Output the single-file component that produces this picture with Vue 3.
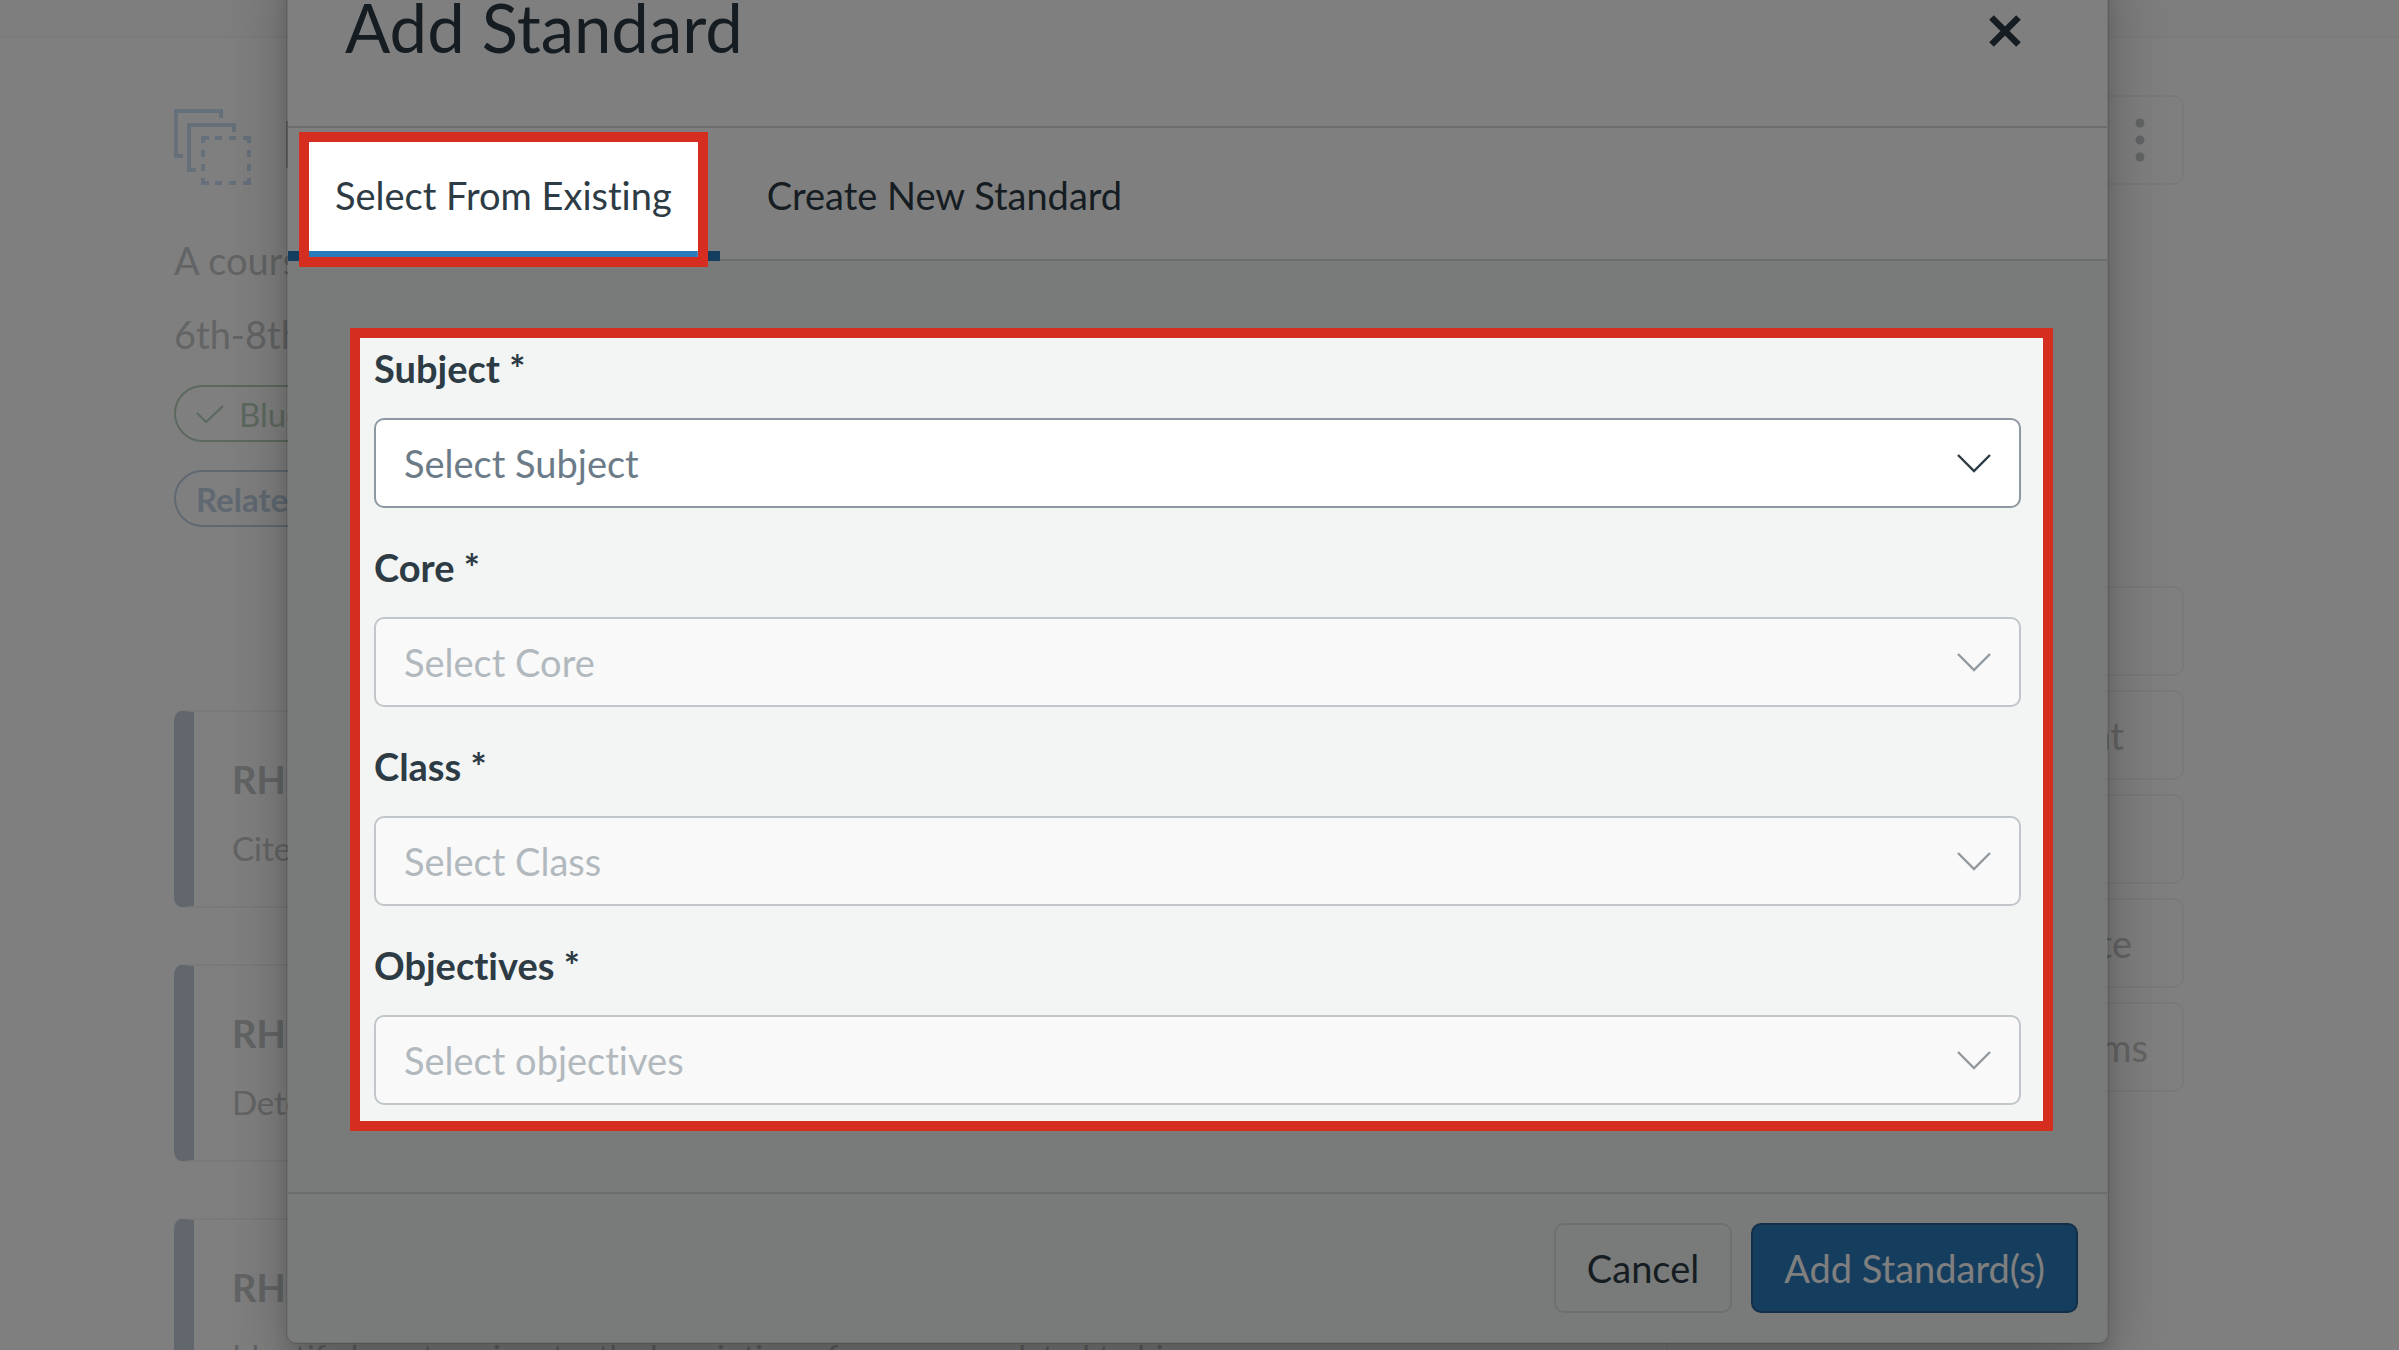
<script setup>
const fields = [
  { id: 'subject', label: 'Subject', placeholder: 'Select Subject', disabled: false },
  { id: 'core', label: 'Core', placeholder: 'Select Core', disabled: true },
  { id: 'class', label: 'Class', placeholder: 'Select Class', disabled: true },
  { id: 'objectives', label: 'Objectives', placeholder: 'Select objectives', disabled: true },
]

const standards = [
  { code: 'RH 6-8.1', text: 'Cite specific textual evidence to support analysis' },
  { code: 'RH 6-8.2', text: 'Determine the central ideas or information' },
  { code: 'RH 6-8.3', text: "Identify key steps in a text's description of a process related to hi..." },
]

const actions = [
  { text: '', size: 'short' },
  { text: 'Content', size: 'short' },
  { text: '', size: 'short' },
  { text: 'Duplicate', size: 'medium' },
  { text: 'Programs', size: 'long' },
]
</script>

<template>
  <div class="app">
    <div class="page">
      <div class="navbar"></div>
      <div class="columns">
        <main class="course">
          <div class="course-head">
            <svg class="course-icon" viewBox="0 0 78 78" fill="none" stroke="#cce0f4" stroke-width="4">
              <path d="M47 9V2H2v45h7" />
              <path d="M60 23v-7H15v45h7" />
              <path d="M29 34v-5h6M41 29h7M55 29h7M69 29h6v5M75 41v7M75 55v7M75 69v5h-6M62 74h-7M48 74h-7M35 74h-6v-5M29 62v-7M29 48v-7" />
            </svg>
            <h1>History</h1>
          </div>
          <p class="line">A course</p>
          <p class="line grades">6th-8th</p>
          <span class="pill published">
            <svg viewBox="0 0 28 20" fill="none" stroke="currentColor" stroke-width="2"><path d="M1 9l9 9L27 2" /></svg>
            Blueprint
          </span>
          <span class="pill related">Related</span>
          <section class="cards">
            <article v-for="item in standards" :key="item.code" class="card">
              <h2>{{ item.code }}</h2>
              <p>{{ item.text }}</p>
            </article>
          </section>
        </main>
        <aside class="side">
          <button class="side-button more" aria-label="More options">
            <svg viewBox="0 0 10 44" fill="currentColor"><circle cx="5" cy="5" r="4.5" /><circle cx="5" cy="22" r="4.5" /><circle cx="5" cy="39" r="4.5" /></svg>
          </button>
          <div class="actions">
            <button v-for="(action, i) in actions" :key="i" class="side-button" :class="action.size">{{ action.text }}</button>
          </div>
        </aside>
      </div>
    </div>

    <div class="modal" role="dialog" aria-labelledby="modal-title">
      <header class="modal-head">
        <h2 id="modal-title">Add Standard</h2>
        <button class="close" aria-label="Close">
          <svg viewBox="0 0 32 32" stroke="currentColor" stroke-width="6.5"><path d="M2.5 2.5l27 27M29.5 2.5l-27 27" /></svg>
        </button>
      </header>
      <nav class="tabs">
        <button class="tab active"><span class="spotlight tab-spotlight">Select From Existing</span></button>
        <button class="tab">Create New Standard</button>
      </nav>
      <div class="modal-body">
        <form class="spotlight form-spotlight">
          <div v-for="field in fields" :key="field.id" class="field">
            <label :for="field.id">{{ field.label }} *</label>
            <div class="select-wrap">
              <select :id="field.id" :disabled="field.disabled">
                <option>{{ field.placeholder }}</option>
              </select>
              <svg class="chevron" viewBox="0 0 34 20" fill="none" stroke="currentColor" stroke-width="2.4"><path d="M1 2l16 16L33 2" /></svg>
            </div>
          </div>
        </form>
      </div>
      <footer class="modal-foot">
        <button class="button">Cancel</button>
        <button class="button primary">Add Standard(s)</button>
      </footer>
    </div>

    <div class="dim"></div>
  </div>
</template>

<style>
body {
  background: #808080;
}
</style>

<style scoped>
* {
  box-sizing: border-box;
}
h1,
h2,
p {
  margin: 0;
}
button,
select {
  font: inherit;
  font-variant-ligatures: none;
}
.app {
  position: relative;
  display: grid;
  grid-template-columns: minmax(0, 1fr);
  height: 100vh;
  overflow: hidden;
  font-family: Lato, sans-serif;
  font-size: 38px;
  line-height: 46px;
  font-variant-ligatures: none;
  color: #2d3b45;
}
.page,
.modal {
  grid-area: 1 / 1;
}
.page {
  background: #fff;
  color: #c6c9ca;
}
.navbar {
  height: 38px;
  background: #fcfcfc;
  border-bottom: 2px solid #f8f8f8;
}
.columns {
  display: flex;
  justify-content: space-between;
  gap: 76px;
  padding: 57px 215px 0 174px;
}
.course {
  flex: 0 1 1494px;
  display: flex;
  flex-direction: column;
  align-items: flex-start;
  padding-top: 14px;
}
.course-head {
  display: flex;
  gap: 28px;
  height: 78px;
  align-items: flex-start;
}
.course-icon {
  width: 78px;
  height: 78px;
}
h1 {
  font-size: 66px;
  font-weight: 400;
  line-height: 68px;
}
.line {
  margin-top: 50px;
}
.grades {
  margin-top: 28px;
}
.pill {
  display: flex;
  align-items: center;
  gap: 15px;
  height: 57px;
  margin-top: 28px;
  padding: 0 20px;
  border: 2px solid;
  border-radius: 29px;
  font-size: 33px;
}
.pill svg {
  width: 28px;
  height: 20px;
}
.published {
  color: #b8d2bd;
}
.related {
  font-weight: 700;
  color: #c0d2e4;
}
.cards {
  align-self: stretch;
  display: flex;
  flex-direction: column;
  gap: 56px;
  margin-top: 183px;
}
.card {
  height: 198px;
  padding: 44px 38px;
  border: 2px solid #f4f4f4;
  border-left: 20px solid #c4cedc;
  border-radius: 10px;
}
.card h2 {
  font-size: 38px;
  font-weight: 700;
  line-height: 46px;
}
.card p {
  margin-top: 26px;
  font-size: 33px;
  line-height: 40px;
  white-space: nowrap;
}
.side {
  flex: 0 0 360px;
  display: flex;
  flex-direction: column;
  align-items: flex-end;
}
.side-button {
  height: 90px;
  border: 2px solid #f4f4f4;
  border-radius: 10px;
  background: none;
  color: #c6c9ca;
  text-align: right;
}
.more {
  display: flex;
  align-items: center;
  padding: 0 37px;
}
.more svg {
  width: 10px;
  height: 44px;
}
.actions {
  align-self: stretch;
  display: flex;
  flex-direction: column;
  gap: 14px;
  margin-top: 401px;
}
.short {
  padding-right: 58px;
}
.medium {
  padding-right: 50px;
}
.long {
  padding-right: 34px;
}
.modal {
  position: relative;
  align-self: start;
  margin: -50px 290px 0 286px;
  background: #f3f5f4;
  background-clip: padding-box;
  border: 2px solid rgba(0, 0, 0, 0.1);
  border-radius: 10px;
  box-shadow: 0 14px 17px rgba(0, 0, 0, 0.1), 0 24px 66px rgba(0, 0, 0, 0.25);
}
.modal-head {
  display: flex;
  align-items: center;
  justify-content: space-between;
  padding: 33px 86px 57px 57px;
  background: #fff;
  border-bottom: 2px solid #d8dbda;
}
.modal-head h2 {
  font-size: 67px;
  font-weight: 400;
  line-height: 84px;
}
.close {
  height: 32px;
  margin-top: 8px;
  padding: 0;
  border: 0;
  background: none;
  color: #2d3b45;
}
.close svg {
  display: block;
  width: 32px;
  height: 32px;
}
.tabs {
  display: flex;
  height: 133px;
  background: #fff;
  border-bottom: 2px solid #d8dbda;
}
.tab {
  height: 133px;
  padding: 0 47px;
  border: 0;
  background: none;
  color: inherit;
}
.active {
  display: flex;
  align-items: flex-start;
  padding: 4px 12px 0 11px;
  border-bottom: 10px solid #2b7abc;
}
.spotlight {
  position: relative;
  z-index: 2;
  border: 10px solid #d52e20;
}
.tab-spotlight {
  display: block;
  height: 135px;
  padding: 30px 26px;
  background: linear-gradient(#2b7abc, #2b7abc) bottom / 100% 6px no-repeat padding-box #fff;
}
.modal-body {
  padding: 67px 54px 61px 62px;
}
.form-spotlight {
  display: flex;
  flex-direction: column;
  gap: 34px;
  padding: 5px 22px 16px 14px;
  background: #f3f5f4;
}
label {
  display: block;
  margin-bottom: 25px;
  font-weight: 700;
  line-height: 50px;
}
.select-wrap {
  position: relative;
}
select {
  display: block;
  appearance: none;
  width: 100%;
  height: 90px;
  padding: 0 80px 0 28px;
  border: 2px solid #8e98a2;
  border-radius: 10px;
  background: #fff;
  color: #6b7b87;
  opacity: 1;
}
select:disabled {
  background: #f9f9f9;
  border-color: #c0c6ca;
  color: #b2b9be;
}
.chevron {
  position: absolute;
  right: 30px;
  top: 35px;
  width: 34px;
  height: 20px;
  color: #2d3b45;
  pointer-events: none;
}
select:disabled + .chevron {
  color: #929a9f;
}
.modal-foot {
  display: flex;
  justify-content: flex-end;
  gap: 19px;
  padding: 29px;
  border-top: 2px solid #d8dbda;
}
.button {
  height: 90px;
  padding: 0 31px;
  border: 2px solid #dcdfde;
  border-radius: 10px;
  background: none;
  color: inherit;
}
.primary {
  border-color: #235f93;
  background: #2b7abc;
  color: #fff;
}
.dim {
  position: absolute;
  inset: 0;
  z-index: 1;
  background: rgba(0, 0, 0, 0.5);
  pointer-events: none;
}
</style>
